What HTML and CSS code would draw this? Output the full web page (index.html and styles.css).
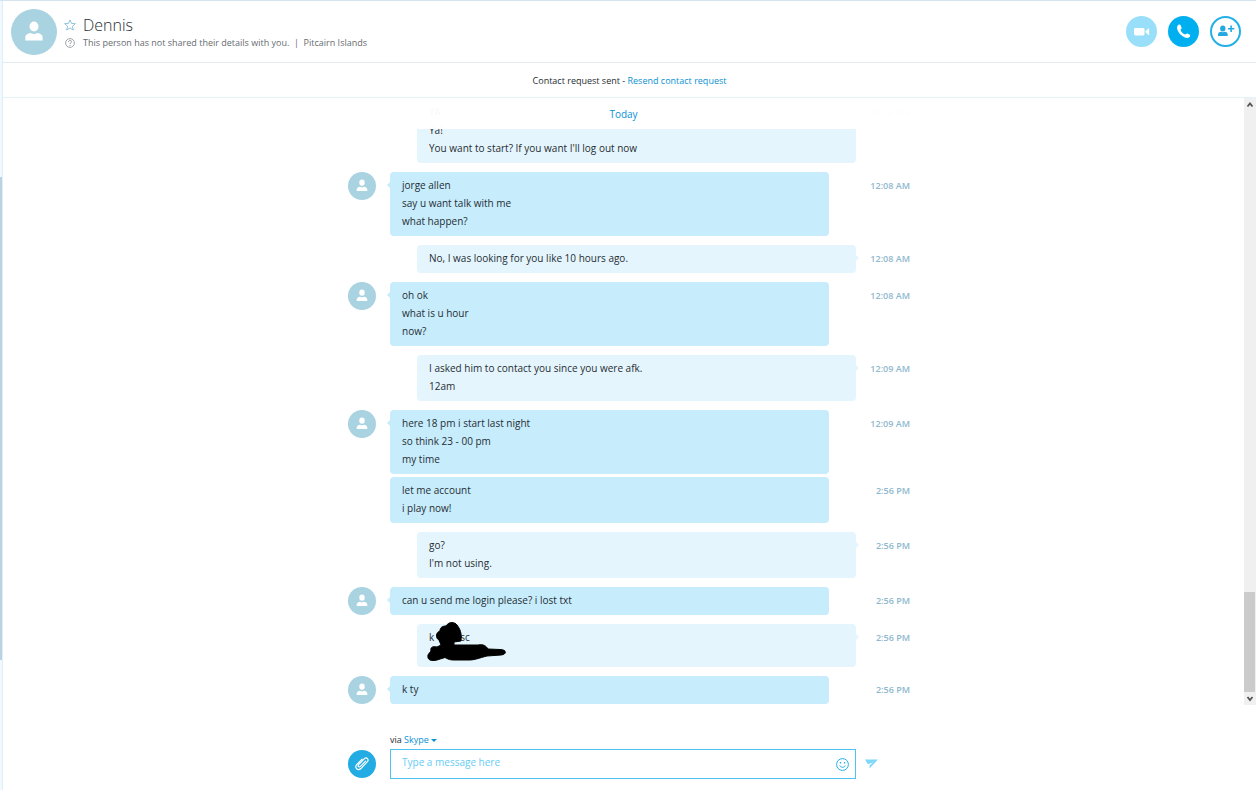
FILE: index.html
```html
<!DOCTYPE html>
<html lang="en">
<head>
  <meta charset="UTF-8">
  <meta name="viewport" content="width=device-width, initial-scale=1.0">
  <title>Dennis</title>
  <link rel="stylesheet" href="styles.css">
</head>
<body>

  <!-- shared icons -->
  <svg class="sprite" aria-hidden="true">
    <symbol id="person" viewBox="0 0 46 46">
      <ellipse cx="23" cy="17.500" rx="4.500" ry="5"/>
      <path d="M14.300 31.400v-2.600c0-2.800 2.400-4.300 5.200-4.700 2.200 1.300 4.800 1.300 7 0 2.800.4 5.200 1.900 5.200 4.700v2.600z"/>
    </symbol>
  </svg>

  <div class="rail"><div class="rail-thumb"></div></div>

  <main class="conversation">
    <header class="header">
      <div class="avatar avatar-large"><svg><use href="#person"/></svg></div>
      <div class="contact">
        <div class="contact-row">
          <button class="icon-button" aria-label="Add to favorites">
            <svg width="12" height="12" viewBox="0 0 12 12" fill="none" stroke="#8fc3da"><path d="M6 .9l1.500 3.500 3.900.3-3 2.500.9 3.800L6 9l-3.300 2 .9-3.800-3-2.500 3.900-.3z"/></svg>
          </button>
          <h1>Dennis</h1>
        </div>
        <div class="contact-row">
          <svg class="status" width="10" height="10" viewBox="0 0 10 10" fill="none" stroke="#8c9296"><circle cx="5" cy="5" r="4.400" stroke-width=".8"/><path d="M3.500 3.900c0-2 3-2 3-.2 0 1.100-1.500 1-1.500 2.300M5 7v1"/></svg>
          <p>This person has not shared their details with you. &nbsp;|&nbsp; Pitcairn Islands</p>
        </div>
      </div>
      <div class="actions">
        <button class="round video" aria-label="Video call">
          <svg width="31" height="31" viewBox="0 0 31 31" fill="#fff"><rect x="8" y="12" width="10.500" height="7.500" rx="1.400"/><path d="M19.200 15.700l3.100-3.300q.8-.4.8.5v5.600q0 .900-.8.500z"/></svg>
        </button>
        <button class="round call" aria-label="Call">
          <svg width="31" height="31" viewBox="0 0 31 31" fill="#fff"><path d="M10.300 9.100c1.200-.9 2-.5 2.500.6l.8 1.900c.3 1-.9 1.500-1 2.200.3 2 2.400 4.200 4.500 4.700.8 0 1.300-1.300 2.300-.9l2 1c1 .6 1.200 1.400.2 2.400-1.300 1.300-3 1.200-4.700.5-3.600-1.500-6.500-4.300-7.600-7.900-.5-1.800-.3-3.500 1-4.500z"/></svg>
        </button>
        <button class="round add" aria-label="Add people">
          <svg width="27" height="27" viewBox="1 1 27 27" fill="#23a9e0"><ellipse cx="11.800" cy="11.600" rx="2.700" ry="3"/><path d="M7 19v-1.500c0-1.700 1.400-2.600 2.900-2.800q2 .900 3.900 0c1.500.2 2.900 1.100 2.900 2.800V19zM19.300 8.500h1.600v2.400h2.400v1.600h-2.400v2.400h-1.600v-2.400h-2.400v-1.600h2.400z"/></svg>
        </button>
      </div>
    </header>

    <div class="notice">Contact request sent - <a href="#">Resend contact request</a></div>

    <section class="chat">
      <div class="viewport">
        <div class="day">Today</div>
        <div class="messages">
          <div class="message outgoing">
            <div class="bubble">YA<br>Ya!<br>You want to start? If you want I'll log out now</div>
            <time>12:06 AM</time>
          </div>
          <div class="message incoming">
            <div class="avatar"><svg><use href="#person"/></svg></div>
            <div class="bubble tail">jorge allen<br>say u want talk with me<br>what happen?</div>
            <time>12:08 AM</time>
          </div>
          <div class="message outgoing">
            <div class="bubble tail">No, I was looking for you like 10 hours ago.</div>
            <time>12:08 AM</time>
          </div>
          <div class="message incoming">
            <div class="avatar"><svg><use href="#person"/></svg></div>
            <div class="bubble tail">oh ok<br>what is u hour<br>now?</div>
            <time>12:08 AM</time>
          </div>
          <div class="message outgoing">
            <div class="bubble tail">I asked him to contact you since you were afk.<br>12am</div>
            <time>12:09 AM</time>
          </div>
          <div class="message incoming">
            <div class="avatar"><svg><use href="#person"/></svg></div>
            <div class="bubble tail">here 18 pm i start last night<br>so think 23 - 00 pm<br>my time</div>
            <time>12:09 AM</time>
          </div>
          <div class="message incoming follow">
            <div class="bubble">let me account<br>i play now!</div>
            <time>2:56 PM</time>
          </div>
          <div class="message outgoing">
            <div class="bubble tail">go?<br>I'm not using.</div>
            <time>2:56 PM</time>
          </div>
          <div class="message incoming">
            <div class="avatar"><svg><use href="#person"/></svg></div>
            <div class="bubble tail">can u send me login please? i lost txt</div>
            <time>2:56 PM</time>
          </div>
          <div class="message outgoing">
            <div class="bubble tail scribbled">k<span class="blank"></span>sc
              <svg class="scribble" width="82" height="42" viewBox="0 0 82 42"><path stroke="#000" d="M20 4c3-5 9-4 11-1 3 4 5 8 4 16l-7 1v3h24c6-1 8 1 10 4l12 .5c7 0 7 5 1 5.500l-14 1c-8 2-12 4-18 4H28c-5 0-6-1-9-2.500-3 1-5 1.500-8 2.500-6 1.500-10 0-9-5 1-2 2-3 3-4-1-4 2-5 6-4l4-2-2-5c-4-2-3-8 1-9 0-4 3-5 6-5z"/></svg>
            </div>
            <time>2:56 PM</time>
          </div>
          <div class="message incoming">
            <div class="avatar"><svg><use href="#person"/></svg></div>
            <div class="bubble tail">k ty</div>
            <time>2:56 PM</time>
          </div>
        </div>
      </div>
      <div class="scrollbar">
        <svg width="12" height="13" viewBox="0 0 12 13" fill="none" stroke="#555" stroke-width="1.800"><path d="M3.500 8.500L6 5.500l2.500 3"/></svg>
        <div class="track"><div class="thumb"></div></div>
        <svg width="12" height="13" viewBox="0 0 12 13" fill="none" stroke="#555" stroke-width="1.800"><path d="M3.500 5L6 8l2.500-3"/></svg>
      </div>
    </section>

    <form class="composer">
      <div class="via">via <button type="button">Skype <span class="caret"></span></button></div>
      <button type="button" class="attach" aria-label="Attach file">
        <svg width="28" height="28" viewBox="0 0 28 28" fill="none" stroke="#fff" stroke-width="1.200" stroke-linecap="round"><path d="M17.500 11.200l-5 5.200c-1.400 1.400-3.200-.2-1.900-1.700l5.600-5.800c2.300-2.200 5.200.4 3.200 2.800l-6.200 6.600c-3.400 3.200-7.200-.7-4.300-3.900l5.200-5.300"/></svg>
      </button>
      <div class="field">
        <input type="text" aria-label="Message" placeholder="Type a message here">
        <button type="button" class="icon-button" aria-label="Emoticons">
          <svg width="13" height="13" viewBox="0 0 13 13" fill="none" stroke="#23b0e8"><circle cx="6.500" cy="6.500" r="5.900"/><path d="M3.800 7.500c.8 2.400 4.600 2.400 5.400 0"/><path d="M4.500 4v1.500M8.500 4v1.500" stroke-width="1.300"/></svg>
        </button>
      </div>
      <button class="icon-button send" aria-label="Send">
        <svg width="13" height="10" viewBox="0 0 13 10" fill="#7fd8f9"><path d="M0 .5h13L4.500 9.500V6.500L8 3.500 2.800 5.200z"/></svg>
      </button>
    </form>
  </main>

</body>
</html>
```
FILE: styles.css
```css
* {
  box-sizing: border-box;
}

body {
  margin: 0;
  height: 100vh;
  display: flex;
  border-top: 1px solid #d5e3ef;
  font-family: "Open Sans", "Noto Sans", sans-serif;
  font-size: 10px;
  color: #262d33;
  background: #fff;
}

button {
  padding: 0;
  border: 0;
  background: none;
  font: inherit;
  cursor: pointer;
}

a {
  color: #0a91d2;
  text-decoration: none;
}

svg {
  display: block;
}

.sprite {
  position: absolute;
  width: 0;
  height: 0;
}

/* sliver of the contact list */
.rail {
  width: 3px;
  display: grid;
  grid-template-rows: 176fr 483fr 130fr;
  border-right: 1px solid #e3eef4;
  background: #effafe;
}

.rail-thumb {
  grid-row: 2;
  background: #b9d3e0;
}

.conversation {
  flex: 1;
  min-width: 0;
  display: flex;
  flex-direction: column;
}

/* header */
.header {
  display: flex;
  align-items: center;
  height: 62px;
  padding: 0 15px 0 8px;
  border-bottom: 1px solid #e1ebf1;
}

.avatar {
  width: 28px;
  height: 28px;
  border-radius: 50%;
  background: #a9d3e1;
}

.avatar svg {
  width: 100%;
  height: 100%;
  fill: #fff;
}

.avatar-large {
  width: 46px;
  height: 46px;
}

.contact {
  flex: 1;
  padding-left: 7px;
}

.contact-row {
  display: grid;
  grid-template-columns: 12px 1fr;
  gap: 7px;
  align-items: center;
  justify-items: start;
}

.status {
  justify-self: center;
}

h1 {
  margin: 0;
  font-size: 16px;
  font-weight: 300;
  line-height: 22px;
}

.contact p {
  margin: 0;
  font-size: 9px;
  line-height: 14px;
  color: #666c70;
}

.actions {
  display: flex;
  gap: 11px;
}

.round {
  width: 31px;
  height: 31px;
  border-radius: 50%;
}

.video {
  background: #99dff9;
}

.call {
  background: #00aff0;
}

.add {
  border: 2px solid #23b0e8;
}

.notice {
  height: 35px;
  border-bottom: 1px solid #e4f2f9;
  font-size: 9px;
  line-height: 36px;
  text-align: center;
}

/* messages */
.chat {
  flex: 1;
  min-height: 0;
  display: flex;
}

.viewport {
  position: relative;
  flex: 1;
  display: flex;
  flex-direction: column;
  justify-content: flex-end;
  overflow: hidden;
}

.day {
  position: absolute;
  inset: 0 0 auto;
  z-index: 1;
  height: 31px;
  line-height: 32px;
  text-align: center;
  color: #0a91d2;
  background: rgba(255, 255, 255, 0.97);
}

.messages {
  width: 100%;
  max-width: 575px;
  margin: 0 auto;
  padding: 0 1px 1px 12px;
}

.message {
  display: grid;
  grid-template-columns: 42px 27px 1fr 27px 54px;
  margin-top: 9px;
  line-height: 18px;
}

.follow {
  margin-top: 3px;
}

.bubble {
  position: relative;
  grid-row: 1;
  padding: 4px 12px 6px;
  border-radius: 4px;
}

.incoming .bubble {
  grid-column: 2 / 4;
  background: #c7ecfc;
}

.outgoing .bubble {
  grid-column: 3 / 5;
  background: #e5f5fd;
}

.tail::before {
  content: "";
  position: absolute;
  top: 10px;
  border: 3px solid transparent;
}

.incoming .tail::before {
  right: 100%;
  border-left-width: 0;
  border-right-color: #c7ecfc;
}

.outgoing .tail::before {
  left: 100%;
  border-right-width: 0;
  border-left-color: #e5f5fd;
}

time {
  grid-column: 5;
  padding-top: 5px;
  font-size: 9px;
  font-weight: 600;
  text-align: right;
  color: #8fb8ce;
}

.scribbled {
  min-height: 43px;
}

.blank {
  display: inline-block;
  width: 26px;
}

.scribble {
  position: absolute;
  top: -2px;
  left: 9px;
}

.scrollbar {
  width: 12px;
  display: flex;
  flex-direction: column;
  background: #f0f0f0;
}

.track {
  flex: 1;
  display: grid;
  grid-template-rows: 481fr 100fr;
}

.thumb {
  grid-row: 2;
  margin-right: 1px;
  background: #cbcbcb;
}

/* composer */
.composer {
  display: grid;
  grid-template-columns: 42px 1fr 55px;
  align-items: center;
  width: 100%;
  max-width: 563px;
  margin: 0 auto;
  padding: 26px 0 11px;
}

.via {
  grid-column: 2 / 4;
  font-size: 9px;
  line-height: 18px;
}

.via button {
  color: #0a91d2;
}

.caret {
  display: inline-block;
  vertical-align: middle;
  border: 3px solid transparent;
  border-top-color: #0a91d2;
  border-bottom: 0;
}

.attach {
  grid-column: 1;
  width: 28px;
  height: 28px;
  border-radius: 50%;
  background: #23ace3;
}

.field {
  display: flex;
  align-items: center;
  height: 30px;
  padding-right: 6px;
  border: 1px solid #4cc3f0;
}

.field input {
  flex: 1;
  min-width: 0;
  padding: 0 11px 4px;
  border: 0;
  outline: 0;
  font: inherit;
  background: none;
}

.field input::placeholder {
  color: #66cdf5;
}

.send {
  padding-left: 9px;
}
```
